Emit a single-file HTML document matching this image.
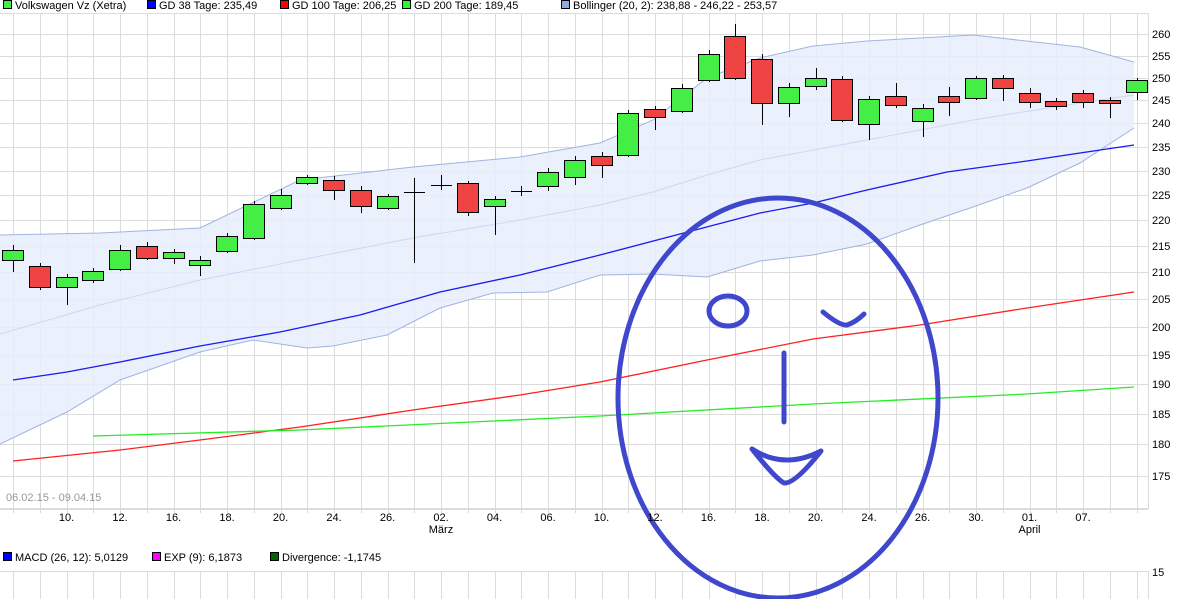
<!DOCTYPE html>
<html><head><meta charset="utf-8"><style>
body{margin:0;background:#fff;width:1185px;height:599px;overflow:hidden;font-family:"Liberation Sans",sans-serif;}
svg text{font-family:"Liberation Sans",sans-serif;font-size:11px;}
</style></head><body>
<svg width="1185" height="599" xmlns="http://www.w3.org/2000/svg">
<g id="grid" stroke="#dcdcdc" stroke-width="1"></g>
<g id="plot"></g>
<g id="lbl"></g>
</svg>
<script>
const NS="http://www.w3.org/2000/svg";
const svg=document.querySelector('svg');
function el(t,a,p){const e=document.createElementNS(NS,t);for(const k in a)e.setAttribute(k,a[k]);(p||svg).appendChild(e);return e;}
function tx(x,y,s,a){const e=el('text',Object.assign({x:x,y:y},a||{}));e.textContent=s;return e;}
const grid=document.getElementById('grid');
const X=i=>13+26.75*i;
const Y=v=>34+1116*Math.log(260/v);
for(let v=260;v>=170;v-=5){const y=Math.round(Y(v))+0.5;if(y<509)el('line',{x1:0,x2:1148,y1:y,y2:y},grid);}
el('line',{x1:0,x2:1148,y1:13.5,y2:13.5},grid);
el('line',{x1:0,x2:1148,y1:509.5,y2:509.5},grid);
for(let i=0;i<43;i++){const x=Math.round(X(i))+0.5;el('line',{x1:x,x2:x,y1:13,y2:513},grid);el('line',{x1:x,x2:x,y1:571,y2:599},grid);}
el('line',{x1:1148.5,x2:1148.5,y1:13,y2:509},grid);
el('line',{x1:1148.5,x2:1148.5,y1:571,y2:599},grid);
el('line',{x1:0,x2:1148,y1:571.5,y2:571.5},grid);
const up=[[0,235],[100,233],[200,228],[300,180],[413,167],[520,157],[600,143],[653,120],[707,78],[760,58],[813,46],[867,41],[973,35],[1080,47],[1134,62]];
const lo=[[0,444],[67,412],[120,380],[200,352],[253,340],[307,348],[333,346],[387,335],[440,308],[493,293],[547,292],[600,275],[653,274],[707,277],[760,261],[813,255],[867,244],[920,225],[973,207],[1027,188],[1080,163],[1134,128]];
const pts=a=>a.map(p=>p.join(',')).join(' ');
el('polygon',{points:pts(up)+' '+pts(lo.slice().reverse()),fill:'#e6effc','fill-opacity':'0.85'});
el('polyline',{points:pts(up),fill:'none',stroke:'#a0b4e0'});
el('polyline',{points:pts(lo),fill:'none',stroke:'#a0b4e0'});
el('polyline',{points:pts([[0,334],[100,305],[200,280],[300,260],[413,238],[520,220],[600,205],[653,192],[707,175],[760,160],[867,140],[973,120],[1080,103],[1134,95]]),fill:'none',stroke:'#c8d8f4'});
el('polyline',{points:pts([[13,380],[67,372],[120,362],[200,346],[280,332],[360,315],[440,292],[520,275],[600,255],[680,234],[760,213],[813,203],[867,190],[947,172],[1027,161],[1080,153],[1134,145]]),fill:'none',stroke:'#1a1aee','stroke-width':1.3});
el('polyline',{points:pts([[13,461],[120,450],[200,440],[300,427],[413,410],[520,395],[600,382],[707,360],[813,339],[920,325],[1027,308],[1134,292]]),fill:'none',stroke:'#ff2020','stroke-width':1.3});
el('polyline',{points:pts([[93,436],[300,430],[600,416],[813,404],[1027,394],[1134,387]]),fill:'none',stroke:'#22ee22','stroke-width':1.3});
const c=[['g',250,260,245,272],['r',266,287,263,290],['g',277,287,274,305],['g',271,280,268,283],['g',250,269,245,271],['r',246,258,242,260],['g',252,258,249,264],['g',260,265,256,276],['g',236,251,233,253],['g',204,238,201,240],['g',195,208,189,210],['g',177,183,175,185],['r',180,190,176,200],['r',190,206,186,213],['g',196,208,194,210],['d',192,192,178,263],['d',185,185,175,190],['r',183,212,181,216],['g',199,206,196,235],['d',191,191,186,196],['g',172,186,168,191],['g',160,177,156,185],['r',156,165,152,178],['g',113,155,110,157],['r',109,117,106,130],['g',88,111,84,113],['g',54,80,50,82],['r',36,78,24,80],['r',59,103,54,125],['g',87,103,83,117],['g',78,86,68,90],['r',79,120,76,122],['g',99,124,96,140],['r',96,105,83,108],['g',108,121,104,137],['r',96,102,87,116],['g',78,98,76,100],['r',78,88,75,101],['r',93,102,88,108],['r',101,106,98,110],['r',93,102,90,108],['r',100,103,97,118],['g',80,92,78,100]];
c.forEach((d,i)=>{const x=Math.round(X(i));
el('line',{x1:x+0.5,x2:x+0.5,y1:d[3],y2:d[4],stroke:'#000'});
if(d[0]=='d'){el('line',{x1:x-10,x2:x+11,y1:d[1]+0.5,y2:d[1]+0.5,stroke:'#000'});}
else el('rect',{x:x-10.5,y:d[1]+0.5,width:21,height:Math.max(1,d[2]-d[1]),fill:d[0]=='g'?'#44ee44':'#ee4444',stroke:'#000'});
});
const f={fill:'none',stroke:'#3f48cc','stroke-width':5,'stroke-linecap':'round','stroke-linejoin':'round'};
el('ellipse',Object.assign({cx:778,cy:398,rx:160,ry:200},f));
el('ellipse',Object.assign({cx:728,cy:311,rx:19,ry:15,'stroke-width':4},f));
el('path',Object.assign({d:'M823 312 Q840 326 847 325 Q856 322 864 314','stroke-width':4},f));
el('line',Object.assign({x1:784,y1:353,x2:784,y2:422,'stroke-width':4},f));
el('path',Object.assign({d:'M752 449 Q784 470 821 451 M752 449 Q775 478 784 483 Q795 484 821 451','stroke-width':4},f));
const L=document.getElementById('lbl');
const leg=[[3,'#44ee44','Volkswagen Vz (Xetra)'],[147,'#0000ff','GD 38 Tage: 235,49'],[280,'#ff0000','GD 100 Tage: 206,25'],[402,'#22ff22','GD 200 Tage: 189,45'],[561,'#94aadc','Bollinger (20, 2): 238,88 - 246,22 - 253,57']];
leg.forEach(l=>{el('rect',{x:l[0]+0.5,y:0.5,width:8,height:8,fill:l[1],stroke:'#000'},L);tx(l[0]+12,9,l[2],{fill:'#000'});});
const leg2=[[3,'#0000ff','MACD (26, 12): 5,0129'],[152,'#ff00ff','EXP (9): 6,1873'],[270,'#006600','Divergence: -1,1745']];
leg2.forEach(l=>{el('rect',{x:l[0]+0.5,y:552.5,width:8,height:8,fill:l[1],stroke:'#000'},L);tx(l[0]+12,561,l[2],{fill:'#000'});});
for(let v=260;v>=175;v-=5){tx(1152,Math.round(Y(v))+4,String(v),{fill:'#000'});}
tx(1152,576,'15',{fill:'#000'});
tx(6,501,'06.02.15 - 09.04.15',{fill:'#999'});
const xl=[[2,'10.'],[4,'12.'],[6,'16.'],[8,'18.'],[10,'20.'],[12,'24.'],[14,'26.'],[16,'02.'],[18,'04.'],[20,'06.'],[22,'10.'],[24,'12.'],[26,'16.'],[28,'18.'],[30,'20.'],[32,'24.'],[34,'26.'],[36,'30.'],[38,'01.'],[40,'07.']];
xl.forEach(l=>tx(X(l[0]),521,l[1],{'text-anchor':'middle',fill:'#000'}));
tx(X(16),533,'März',{'text-anchor':'middle',fill:'#000'});
tx(X(38),533,'April',{'text-anchor':'middle',fill:'#000'});
</script>
</body></html>
